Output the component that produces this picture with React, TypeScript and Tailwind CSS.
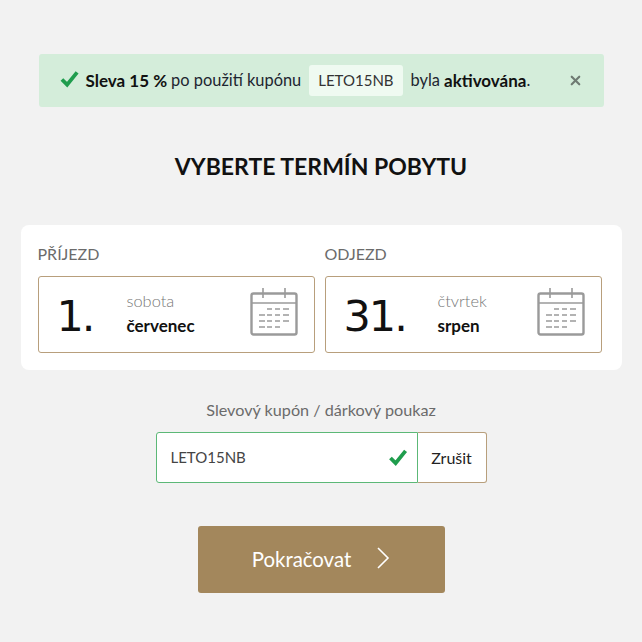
import React from "react";
import { X } from "lucide-react";

function Check({ className }: { className: string }) {
  return (
    <svg viewBox="0 0 20 18" className={className} fill="none">
      <path d="M2 9.5 L7.5 15 L18 2" stroke="#1f9d4d" strokeWidth="4" />
    </svg>
  );
}

function CalendarIcon() {
  return (
    <svg viewBox="0 0 48 48" className="w-[48px] h-[48px] shrink-0 mb-[5px]" fill="none" stroke="#9a9a9a">
      <rect x="1.5" y="5.5" width="45" height="41" rx="2" strokeWidth="2.4" />
      <path d="M1.5 15h45" strokeWidth="1.6" />
      <path d="M13 0v10M35 0v10" strokeWidth="1.6" />
      <path
        d="M17 21h5M25 21h5M33 21h6M9 27h6M17 27h5M25 27h5M33 27h6M9 33h6M17 33h5M25 33h5M33 33h6M9 39h6M17 39h5M25 39h5"
        strokeWidth="1.4"
      />
    </svg>
  );
}

function DateBox({ label, day, weekday, month, dayW }: { label: string; day: string; weekday: string; month: string; dayW: string }) {
  return (
    <div className="flex-1">
      <div className="text-[16px] leading-[20px] text-[#6b6b6b] mb-[12px]">{label}</div>
      <div className="h-[77px] flex items-center border border-[#b89f7c] rounded-[3px] pl-[18px] pr-[16px]">
        <div className={`${dayW} pt-[3px] text-[43px] leading-none text-[#111] font-["DejaVu_Sans",sans-serif] tracking-[-2px]`}>{day}</div>
        <div className="flex-1 pb-[2px]">
          <div className="text-[16.4px] leading-[20px] text-[#777] font-light mb-[5px]">{weekday}</div>
          <div className="text-[17px] leading-[20px] text-[#111] font-bold">{month}</div>
        </div>
        <CalendarIcon />
      </div>
    </div>
  );
}

export default function App() {
  return (
    <div className="w-[642px] h-[642px] bg-[#f2f2f2] font-['Lato',sans-serif] flex flex-col items-center pt-[54px]">
      <div className="w-[565px] h-[53px] bg-[#d4edda] rounded-[3px] flex items-center pl-[21px] pr-[21px] text-[16.4px] text-[#1d2530]">
        <Check className="w-[19px] h-[18px] mb-[3px] mr-[7px] shrink-0" />
        <b className="text-[17px] font-bold text-[#111]">Sleva 15 %</b>
        <span className="ml-[4px]">po použití kupónu</span>
        <span className="ml-[8px] h-[31px] px-[9px] flex items-center bg-[#effaf1] rounded-[3px] text-[#333] text-[15px]">LETO15NB</span>
        <span className="ml-[8px]">byla</span>
        <b className="ml-[4px] text-[17px] font-bold text-[#111]">aktivována</b>
        <span>.</span>
        <X className="ml-auto w-[15px] h-[15px] text-[#6f7a72]" strokeWidth={3.5} />
      </div>

      <h1 className="mt-[44px] text-[23px] leading-[30px] font-bold text-[#111]">VYBERTE TERMÍN POBYTU</h1>

      <div className="mt-[44px] w-[601px] h-[145px] bg-white rounded-[8px] px-[17px] pt-[19px] pr-[20px] flex gap-[10px]">
        <DateBox label="PŘÍJEZD" day="1." weekday="sobota" month="červenec" dayW="w-[70px]" />
        <DateBox label="ODJEZD" day="31." weekday="čtvrtek" month="srpen" dayW="w-[94px]" />
      </div>

      <div className="mt-[30px] text-[16.2px] leading-[20px] text-[#6b6b6b]">Slevový kupón / dárkový poukaz</div>

      <div className="mt-[12px] flex h-[51px] w-[331px]">
        <div className="flex-1 bg-white border border-[#5cb877] rounded-l-[3px] flex items-center pl-[14px] pr-[9px] text-[15px] text-[#444]">
          LETO15NB
          <Check className="ml-auto w-[20px] h-[17px]" />
        </div>
        <div className="w-[69px] bg-white border border-l-0 border-[#b89f7c] rounded-r-[3px] flex items-center justify-center text-[16px] text-[#222]">
          Zrušit
        </div>
      </div>

      <div className="mt-[43px] w-[247px] h-[67px] bg-[#a3875c] rounded-[3px] flex items-center justify-center text-white text-[20.4px]">
        <span>Pokračovat</span>
        <svg viewBox="0 0 14 24" className="ml-[25px] w-[14px] h-[24px] mb-[3px]" fill="none" stroke="white" strokeWidth="1.6">
          <path d="M2 2 L12 12 L2 22" />
        </svg>
      </div>
    </div>
  );
}
